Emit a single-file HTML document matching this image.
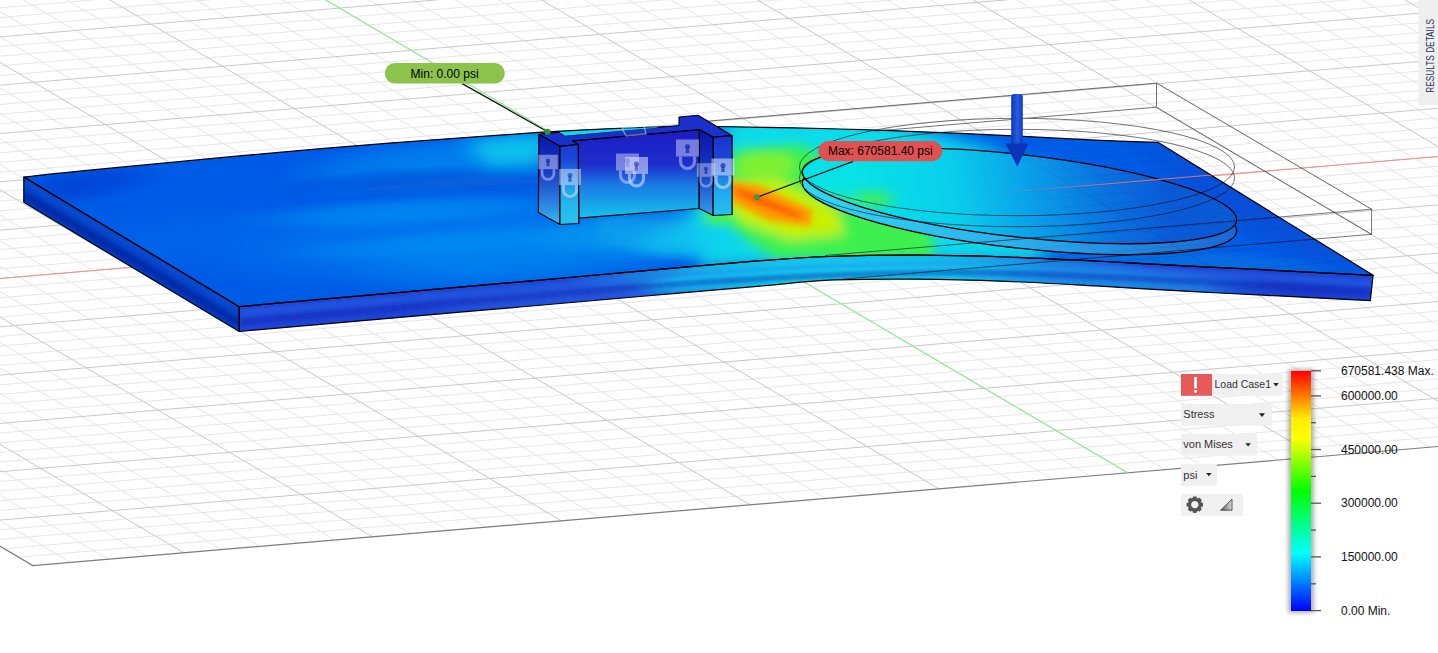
<!DOCTYPE html><html><head><meta charset="utf-8"><style>
html,body{margin:0;padding:0;background:#fff;overflow:hidden}
svg{position:absolute;left:0;top:0;display:block}
text{font-family:"Liberation Sans",sans-serif}
</style></head><body>
<svg width="1438" height="653" viewBox="0 0 1438 653">
<defs>
<filter id="blur10" x="-50%" y="-50%" width="200%" height="200%"><feGaussianBlur stdDeviation="10"/></filter>
<filter id="blur6" x="-50%" y="-50%" width="200%" height="200%"><feGaussianBlur stdDeviation="6"/></filter>
<filter id="blur14" x="-50%" y="-50%" width="200%" height="200%"><feGaussianBlur stdDeviation="14"/></filter>
<filter id="blur3" x="-50%" y="-50%" width="200%" height="200%"><feGaussianBlur stdDeviation="3"/></filter>
<filter id="blur2" x="-50%" y="-50%" width="200%" height="200%"><feGaussianBlur stdDeviation="2"/></filter>
<linearGradient id="bar" x1="0" y1="0" x2="0" y2="1">
<stop offset="0" stop-color="#ff0000"/><stop offset="0.2" stop-color="#ffee00"/><stop offset="0.28" stop-color="#ffff00"/><stop offset="0.5" stop-color="#00ff00"/><stop offset="0.76" stop-color="#00ffff"/><stop offset="1" stop-color="#0000ff"/>
</linearGradient>
</defs>
<rect width="1438" height="653" fill="#fff"/>

<g id="grid"><path d="M70.7 562.4L-1505.6 -367.1 M108.4 559.2L-1467.9 -370.3 M146.2 556.0L-1430.1 -373.5 M221.7 549.6L-1354.6 -379.9 M259.4 546.4L-1316.9 -383.1 M297.2 543.2L-1279.1 -386.3 M334.9 540.0L-1241.4 -389.5 M410.4 533.6L-1165.9 -395.9 M448.2 530.4L-1128.1 -399.1 M485.9 527.2L-1090.4 -402.3 M523.7 524.0L-1052.6 -405.5 M599.2 517.6L-977.1 -411.9 M636.9 514.4L-939.4 -415.1 M674.7 511.2L-901.6 -418.3 M712.4 508.0L-863.9 -421.5 M787.9 501.6L-788.4 -427.9 M825.7 498.4L-750.6 -431.1 M863.4 495.2L-712.9 -434.3 M901.2 492.0L-675.1 -437.5 M976.7 485.6L-599.6 -443.9 M1014.4 482.4L-561.9 -447.1 M1052.2 479.2L-524.1 -450.3 M1089.9 476.0L-486.4 -453.5 M1165.4 469.6L-410.9 -459.9 M1203.2 466.4L-373.1 -463.1 M1240.9 463.2L-335.4 -466.3 M1278.7 460.0L-297.6 -469.5 M1354.2 453.6L-222.1 -475.9 M1391.9 450.4L-184.4 -479.1 M1429.7 447.2L-146.6 -482.3 M1467.4 444.0L-108.9 -485.5 M1542.9 437.6L-33.4 -491.9 M1580.7 434.4L4.4 -495.1 M1618.4 431.2L42.1 -498.3 M1656.2 428.0L79.9 -501.5 M1731.7 421.6L155.4 -507.9 M1769.4 418.4L193.1 -511.1 M1807.2 415.2L230.9 -514.3 M1844.9 412.0L268.6 -517.5 M1920.4 405.6L344.1 -523.9 M1958.2 402.4L381.9 -527.1 M1995.9 399.2L419.6 -530.3 M2033.7 396.0L457.4 -533.5 M2109.2 389.6L532.9 -539.9 M2146.9 386.4L570.6 -543.1 M2184.7 383.2L608.4 -546.3 M2222.4 380.0L646.1 -549.5 M2297.9 373.6L721.6 -555.9 M2335.7 370.4L759.4 -559.1 M2373.4 367.2L797.1 -562.3 M2411.2 364.0L834.9 -565.5 M2486.7 357.6L910.4 -571.9 M2524.5 354.4L948.2 -575.1 M2562.2 351.2L985.9 -578.3 M2600.0 348.0L1023.7 -581.5 M2675.5 341.6L1099.2 -587.9 M2713.2 338.4L1136.9 -591.1 M2751.0 335.2L1174.7 -594.3 M2788.7 332.0L1212.4 -597.5 M2864.2 325.6L1287.9 -603.9 M2902.0 322.4L1325.7 -607.1 M2939.7 319.2L1363.4 -610.3 M2977.5 316.0L1401.2 -613.5 M3053.0 309.6L1476.7 -619.9 M3090.7 306.4L1514.4 -623.1 M3128.5 303.2L1552.2 -626.3 M3166.2 300.0L1589.9 -629.5 M3241.7 293.6L1665.4 -635.9 M3279.5 290.4L1703.2 -639.1 M3317.2 287.2L1740.9 -642.3 M3355.0 284.0L1778.7 -645.5 M3430.5 277.6L1854.2 -651.9 M3468.2 274.4L1891.9 -655.1 M3506.0 271.2L1929.7 -658.3 M3543.7 268.0L1967.4 -661.5 M3619.2 261.6L2042.9 -667.9 M3657.0 258.4L2080.7 -671.1 M3694.7 255.2L2118.4 -674.3 M3732.5 252.0L2156.2 -677.5 M3808.0 245.6L2231.7 -683.9 M3845.7 242.4L2269.4 -687.1 M3883.5 239.2L2307.2 -690.3 M3921.2 236.0L2344.9 -693.5 M3996.7 229.6L2420.4 -699.9 M4034.5 226.4L2458.2 -703.1 M4072.2 223.2L2495.9 -706.3 M4109.9 220.0L2533.7 -709.5 M18.6 557.1L4133.4 208.3 M4.3 548.7L4119.0 199.9 M-10.0 540.2L4104.7 191.4 M-24.4 531.8L4090.4 183.0 M-53.0 514.9L4061.7 166.1 M-67.4 506.5L4047.4 157.7 M-81.7 498.0L4033.1 149.2 M-96.0 489.6L4018.7 140.8 M-124.7 472.6L3990.1 123.8 M-139.0 464.2L3975.7 115.4 M-153.3 455.8L3961.4 106.9 M-167.7 447.3L3947.1 98.5 M-196.3 430.4L3918.4 81.6 M-210.7 422.0L3904.1 73.2 M-225.0 413.5L3889.8 64.7 M-239.3 405.1L3875.4 56.2 M-268.0 388.2L3846.8 39.4 M-282.3 379.7L3832.4 30.9 M-296.6 371.2L3818.1 22.5 M-311.0 362.8L3803.8 14.0 M-339.6 345.9L3775.1 -2.9 M-354.0 337.5L3760.8 -11.3 M-368.3 329.0L3746.5 -19.8 M-382.6 320.6L3732.1 -28.2 M-411.3 303.7L3703.5 -45.1 M-425.6 295.2L3689.1 -53.6 M-439.9 286.8L3674.8 -62.0 M-454.3 278.3L3660.5 -70.5 M-482.9 261.4L3631.8 -87.4 M-497.3 253.0L3617.5 -95.8 M-511.6 244.5L3603.2 -104.3 M-525.9 236.1L3588.8 -112.7 M-554.6 219.2L3560.2 -129.6 M-568.9 210.7L3545.8 -138.1 M-583.2 202.3L3531.5 -146.5 M-597.6 193.8L3517.2 -155.0 M-626.2 176.9L3488.5 -171.9 M-640.6 168.5L3474.2 -180.3 M-654.9 160.0L3459.9 -188.8 M-669.2 151.6L3445.5 -197.2 M-697.9 134.7L3416.9 -214.1 M-712.2 126.2L3402.5 -222.6 M-726.5 117.8L3388.2 -231.0 M-740.9 109.3L3373.9 -239.5 M-769.5 92.4L3345.2 -256.4 M-783.9 84.0L3330.9 -264.8 M-798.2 75.5L3316.6 -273.3 M-812.5 67.1L3302.2 -281.8 M-841.2 50.2L3273.6 -298.6 M-855.5 41.7L3259.2 -307.1 M-869.8 33.3L3244.9 -315.5 M-884.2 24.8L3230.6 -324.0 M-912.8 7.9L3201.9 -340.9 M-927.2 -0.5L3187.6 -349.3 M-941.5 -9.0L3173.3 -357.8 M-955.8 -17.4L3158.9 -366.2 M-984.5 -34.3L3130.3 -383.1 M-998.8 -42.8L3115.9 -391.6 M-1013.1 -51.2L3101.6 -400.0 M-1027.5 -59.7L3087.3 -408.5 M-1056.1 -76.6L3058.6 -425.4 M-1070.5 -85.0L3044.3 -433.8 M-1084.8 -93.5L3030.0 -442.3 M-1099.1 -101.9L3015.6 -450.7 M-1127.8 -118.8L2987.0 -467.6 M-1142.1 -127.3L2972.6 -476.1 M-1156.4 -135.7L2958.3 -484.5 M-1170.8 -144.2L2944.0 -493.0 M-1199.4 -161.1L2915.3 -509.9 M-1213.8 -169.5L2901.0 -518.3 M-1228.1 -178.0L2886.7 -526.8 M-1242.4 -186.4L2872.3 -535.2 M-1271.1 -203.3L2843.7 -552.1 M-1285.4 -211.8L2829.3 -560.6 M-1299.7 -220.2L2815.0 -569.0 M-1314.1 -228.7L2800.7 -577.5 M-1342.7 -245.6L2772.0 -594.4 M-1357.1 -254.0L2757.7 -602.8 M-1371.4 -262.5L2743.4 -611.3 M-1385.7 -270.9L2729.0 -619.8 M-1414.4 -287.8L2700.4 -636.6 M-1428.7 -296.3L2686.0 -645.1 M-1443.0 -304.7L2671.7 -653.5 M-1457.4 -313.2L2657.4 -662.0 M-1486.0 -330.1L2628.7 -678.9 M-1500.4 -338.5L2614.4 -687.3 M-1514.7 -347.0L2600.1 -695.8 M-1529.0 -355.4L2585.7 -704.2" stroke="#e6e6e6" stroke-width="1" fill="none"/><path d="M183.9 552.8L-1392.4 -376.7 M372.7 536.8L-1203.6 -392.7 M561.4 520.8L-1014.9 -408.7 M750.2 504.8L-826.1 -424.7 M938.9 488.8L-637.4 -440.7 M1127.7 472.8L-448.6 -456.7 M1316.4 456.8L-259.9 -472.7 M1505.2 440.8L-71.1 -488.7 M1693.9 424.8L117.6 -504.7 M1882.7 408.8L306.4 -520.7 M2071.4 392.8L495.1 -536.7 M2260.2 376.8L683.9 -552.7 M2448.9 360.8L872.6 -568.7 M2637.7 344.8L1061.4 -584.7 M2826.5 328.8L1250.2 -600.7 M3015.2 312.8L1438.9 -616.7 M3204.0 296.8L1627.7 -632.7 M3392.7 280.8L1816.4 -648.7 M3581.5 264.8L2005.2 -664.7 M3770.2 248.8L2193.9 -680.7 M3959.0 232.8L2382.7 -696.7 M4147.7 216.8L2571.4 -712.7 M-38.7 523.4L4076.1 174.5 M-110.4 481.1L4004.4 132.3 M-182.0 438.9L3932.8 90.0 M-253.7 396.6L3861.1 47.8 M-325.3 354.4L3789.5 5.6 M-397.0 312.1L3717.8 -36.7 M-468.6 269.9L3646.2 -78.9 M-540.2 227.6L3574.5 -121.2 M-611.9 185.4L3502.9 -163.4 M-683.6 143.1L3431.2 -205.7 M-755.2 100.9L3359.6 -247.9 M-826.9 58.6L3287.9 -290.2 M-898.5 16.4L3216.2 -332.4 M-970.2 -25.9L3144.6 -374.7 M-1041.8 -68.1L3073.0 -416.9 M-1113.5 -110.4L3001.3 -459.2 M-1185.1 -152.6L2929.7 -501.4 M-1256.8 -194.9L2858.0 -543.7 M-1328.4 -237.1L2786.4 -586.0 M-1400.1 -279.4L2714.7 -628.2 M-1471.7 -321.6L2643.1 -670.5 M-1543.4 -363.9L2571.4 -712.7" stroke="#c8c8c8" stroke-width="1" fill="none"/>
<path d="M-1543.4 -363.9L32.9 565.6L4147.7 216.8" stroke="#7c7c7c" stroke-width="1.2" fill="none"/>
<line x1="-397.0" y1="312.1" x2="3717.8" y2="-36.7" stroke="#f29090" stroke-width="1.1"/>
<line x1="1127.7" y1="472.8" x2="-448.6" y2="-456.7" stroke="#90ec90" stroke-width="1.1"/>
</g>
<clipPath id="cTop"><path d="M23.8 177.0C36.5 175.7 50.0 174.0 100.0 169.2C150.0 164.4 250.9 154.5 324.0 148.4C397.1 142.3 485.6 135.9 538.3 132.4C591.0 128.9 610.2 128.5 640.0 127.5C669.8 126.5 683.7 126.2 717.0 126.5C750.3 126.8 799.5 127.9 840.0 129.0C880.5 130.1 916.7 131.4 960.0 133.3C1003.3 135.2 1067.0 138.8 1100.0 140.3C1133.0 141.8 1148.2 142.0 1157.9 142.3L1373.1 275.3C1356.6 274.5 1305.3 271.9 1274.0 270.3C1242.7 268.7 1214.7 267.4 1185.0 265.9C1155.3 264.3 1125.7 262.5 1096.0 261.0C1066.3 259.5 1036.7 258.0 1007.0 257.0C977.3 256.0 947.7 255.3 918.0 255.2C888.3 255.1 855.3 255.6 829.0 256.5C802.7 257.4 791.5 258.2 760.0 260.7C728.5 263.1 680.0 267.7 640.0 271.2C600.0 274.7 560.0 278.3 520.0 281.8C480.0 285.3 440.0 288.8 400.0 292.3C360.0 295.8 306.8 300.4 280.0 302.8C253.2 305.2 246.0 306.1 239.2 306.7Z"/></clipPath>
<clipPath id="cFront"><path d="M239.2 306.7C246.0 306.1 253.2 305.2 280.0 302.8C306.8 300.4 360.0 295.8 400.0 292.3C440.0 288.8 480.0 285.3 520.0 281.8C560.0 278.3 600.0 274.7 640.0 271.2C680.0 267.7 728.5 263.1 760.0 260.7C791.5 258.2 802.7 257.4 829.0 256.5C855.3 255.6 888.3 255.1 918.0 255.2C947.7 255.3 977.3 256.0 1007.0 257.0C1036.7 258.0 1066.3 259.5 1096.0 261.0C1125.7 262.5 1155.3 264.3 1185.0 265.9C1214.7 267.4 1242.7 268.7 1274.0 270.3C1305.3 271.9 1356.6 274.5 1373.1 275.3L1370.3 300.6C1354.2 299.8 1304.9 297.3 1274.0 295.7C1243.1 294.1 1214.7 292.8 1185.0 291.2C1155.3 289.6 1125.7 287.5 1096.0 285.9C1066.3 284.3 1036.7 282.5 1007.0 281.4C977.3 280.3 947.7 279.4 918.0 279.2C888.3 279.0 855.3 279.0 829.0 280.1C802.7 281.2 791.5 283.4 760.0 286.1C728.5 288.8 680.0 293.0 640.0 296.5C600.0 300.0 560.0 303.5 520.0 307.0C480.0 310.5 440.0 313.9 400.0 317.4C360.0 320.9 306.8 325.4 280.0 327.8C253.2 330.2 246.0 330.9 239.2 331.5Z"/></clipPath>
<clipPath id="cLeft"><path d="M23.8 177L239.2 306.7L239.2 331.5L23.8 202.3Z"/></clipPath>
<g clip-path="url(#cLeft)"><rect x="0" y="150" width="260" height="200" fill="#0444c8"/><g filter="url(#blur3)"><path d="M23 194 L239 323" stroke="#001a98" stroke-width="6"/><path d="M23 181 L239 310" stroke="#1050d8" stroke-width="4"/></g></g>
<defs><radialGradient id="rg0"><stop offset="0" stop-color="#12d0ee" stop-opacity="1"/><stop offset="0.5" stop-color="#12d0ee" stop-opacity="0.75"/><stop offset="1" stop-color="#12d0ee" stop-opacity="0"/></radialGradient></defs>
<defs><radialGradient id="rg1"><stop offset="0" stop-color="#1a90e8" stop-opacity="1"/><stop offset="0.5" stop-color="#1a90e8" stop-opacity="0.75"/><stop offset="1" stop-color="#1a90e8" stop-opacity="0"/></radialGradient></defs>
<defs><radialGradient id="rg2"><stop offset="0" stop-color="#40e890" stop-opacity="1"/><stop offset="0.5" stop-color="#40e890" stop-opacity="0.75"/><stop offset="1" stop-color="#40e890" stop-opacity="0"/></radialGradient></defs>
<defs><radialGradient id="rg3"><stop offset="0" stop-color="#2a62e0" stop-opacity="1"/><stop offset="0.5" stop-color="#2a62e0" stop-opacity="0.75"/><stop offset="1" stop-color="#2a62e0" stop-opacity="0"/></radialGradient></defs>
<defs><radialGradient id="rg4"><stop offset="0" stop-color="#10c0f0" stop-opacity="1"/><stop offset="0.5" stop-color="#10c0f0" stop-opacity="0.75"/><stop offset="1" stop-color="#10c0f0" stop-opacity="0"/></radialGradient></defs>
<defs><radialGradient id="rg5"><stop offset="0" stop-color="#1a3ccc" stop-opacity="1"/><stop offset="0.5" stop-color="#1a3ccc" stop-opacity="0.75"/><stop offset="1" stop-color="#1a3ccc" stop-opacity="0"/></radialGradient></defs>
<g clip-path="url(#cFront)"><rect x="200" y="240" width="1200" height="100" fill="#1e44d6"/><ellipse cx="860" cy="275" rx="300" ry="40" transform="rotate(0 860 275)" fill="url(#rg0)" opacity="1.0"/><ellipse cx="860" cy="275" rx="200" ry="30" transform="rotate(0 860 275)" fill="url(#rg0)" opacity="0.8"/><ellipse cx="1120" cy="282" rx="170" ry="18" transform="rotate(3 1120 282)" fill="url(#rg1)" opacity="0.9"/><ellipse cx="860" cy="288" rx="110" ry="12" transform="rotate(0 860 288)" fill="url(#rg2)" opacity="0.9"/><ellipse cx="560" cy="297" rx="160" ry="12" transform="rotate(-5 560 297)" fill="url(#rg3)" opacity="0.6"/><ellipse cx="690" cy="283" rx="60" ry="10" transform="rotate(-5 690 283)" fill="url(#rg4)" opacity="0.9"/><ellipse cx="1300" cy="292" rx="100" ry="14" transform="rotate(3 1300 292)" fill="url(#rg5)" opacity="0.8"/><g filter="url(#blur2)"><path d="M240 313 L640 278 C760 268 900 262 1000 264 C1150 269 1250 276 1372 283" stroke="#2a78ec" stroke-width="3" fill="none" opacity="0.6"/><path d="M240 322 L640 287 C760 277 900 271 1000 273 C1150 278 1250 285 1372 292" stroke="#1420b0" stroke-width="3.5" fill="none" opacity="0.75"/></g></g>
<defs><radialGradient id="rg6"><stop offset="0" stop-color="#0078ee" stop-opacity="1"/><stop offset="0.5" stop-color="#0078ee" stop-opacity="0.75"/><stop offset="1" stop-color="#0078ee" stop-opacity="0"/></radialGradient></defs>
<defs><radialGradient id="rg7"><stop offset="0" stop-color="#0086f0" stop-opacity="1"/><stop offset="0.5" stop-color="#0086f0" stop-opacity="0.75"/><stop offset="1" stop-color="#0086f0" stop-opacity="0"/></radialGradient></defs>
<defs><radialGradient id="rg8"><stop offset="0" stop-color="#0088f0" stop-opacity="1"/><stop offset="0.5" stop-color="#0088f0" stop-opacity="0.75"/><stop offset="1" stop-color="#0088f0" stop-opacity="0"/></radialGradient></defs>
<defs><radialGradient id="rg9"><stop offset="0" stop-color="#0090f0" stop-opacity="1"/><stop offset="0.5" stop-color="#0090f0" stop-opacity="0.75"/><stop offset="1" stop-color="#0090f0" stop-opacity="0"/></radialGradient></defs>
<defs><radialGradient id="rg10"><stop offset="0" stop-color="#0094f4" stop-opacity="1"/><stop offset="0.5" stop-color="#0094f4" stop-opacity="0.75"/><stop offset="1" stop-color="#0094f4" stop-opacity="0"/></radialGradient></defs>
<defs><radialGradient id="rg11"><stop offset="0" stop-color="#0050da" stop-opacity="1"/><stop offset="0.5" stop-color="#0050da" stop-opacity="0.75"/><stop offset="1" stop-color="#0050da" stop-opacity="0"/></radialGradient></defs>
<defs><radialGradient id="rg12"><stop offset="0" stop-color="#0068ea" stop-opacity="1"/><stop offset="0.5" stop-color="#0068ea" stop-opacity="0.75"/><stop offset="1" stop-color="#0068ea" stop-opacity="0"/></radialGradient></defs>
<defs><radialGradient id="rg13"><stop offset="0" stop-color="#0040d4" stop-opacity="1"/><stop offset="0.5" stop-color="#0040d4" stop-opacity="0.75"/><stop offset="1" stop-color="#0040d4" stop-opacity="0"/></radialGradient></defs>
<defs><radialGradient id="rg14"><stop offset="0" stop-color="#10c8f0" stop-opacity="1"/><stop offset="0.5" stop-color="#10c8f0" stop-opacity="0.75"/><stop offset="1" stop-color="#10c8f0" stop-opacity="0"/></radialGradient></defs>
<defs><radialGradient id="rg15"><stop offset="0" stop-color="#0a9cf0" stop-opacity="1"/><stop offset="0.5" stop-color="#0a9cf0" stop-opacity="0.75"/><stop offset="1" stop-color="#0a9cf0" stop-opacity="0"/></radialGradient></defs>
<defs><radialGradient id="rg16"><stop offset="0" stop-color="#0a4cd6" stop-opacity="1"/><stop offset="0.5" stop-color="#0a4cd6" stop-opacity="0.75"/><stop offset="1" stop-color="#0a4cd6" stop-opacity="0"/></radialGradient></defs>
<defs><radialGradient id="rg17"><stop offset="0" stop-color="#0a72e2" stop-opacity="1"/><stop offset="0.5" stop-color="#0a72e2" stop-opacity="0.75"/><stop offset="1" stop-color="#0a72e2" stop-opacity="0"/></radialGradient></defs>
<g clip-path="url(#cTop)"><rect x="0" y="100" width="1400" height="220" fill="#005ce6"/><ellipse cx="420" cy="235" rx="230" ry="45" transform="rotate(-6 420 235)" fill="url(#rg6)" opacity="0.9"/><ellipse cx="540" cy="250" rx="220" ry="40" transform="rotate(-6 540 250)" fill="url(#rg7)" opacity="0.9"/><ellipse cx="430" cy="165" rx="150" ry="30" transform="rotate(-5 430 165)" fill="url(#rg8)" opacity="0.8"/><ellipse cx="1000" cy="200" rx="200" ry="60" transform="rotate(10 1000 200)" fill="url(#rg9)" opacity="0.8"/><ellipse cx="400" cy="212" rx="190" ry="16" transform="rotate(-3 400 212)" fill="url(#rg10)" opacity="0.6"/><ellipse cx="440" cy="244" rx="170" ry="14" transform="rotate(-4 440 244)" fill="url(#rg10)" opacity="0.5"/><ellipse cx="390" cy="180" rx="130" ry="12" transform="rotate(-4 390 180)" fill="url(#rg11)" opacity="0.6"/><ellipse cx="180" cy="240" rx="140" ry="30" transform="rotate(-8 180 240)" fill="url(#rg12)" opacity="0.6"/><ellipse cx="80" cy="185" rx="90" ry="20" transform="rotate(-8 80 185)" fill="url(#rg13)" opacity="0.8"/><g filter="url(#blur10)"><path d="M460 142 L538 133 L542 165 L490 165Z" fill="#08ccee"/><path d="M600 220 L700 212 L760 230 L700 250 L600 245Z" fill="#10a8ee"/><path d="M690 215 L730 110 L880 115 L990 150 L1060 210 L1040 262 L860 266 L700 268Z" fill="#08dcea"/><path d="M530 136 L620 131 L620 150 L550 158Z" fill="#10c8ec"/><ellipse cx="650" cy="232" rx="30" ry="5" fill="#0a64e0"/></g><g filter="url(#blur6)"><path d="M712 205 L736 150 L800 145 L870 178 L930 228 L935 258 L850 262 L775 258 L740 235Z" fill="#3cf050"/><ellipse cx="866" cy="195" rx="20" ry="7" fill="#60f040"/><ellipse cx="765" cy="165" rx="30" ry="14" fill="#80f030"/><ellipse cx="742" cy="208" rx="10" ry="6" fill="#e0f000"/><ellipse cx="718" cy="218" rx="16" ry="7" fill="#50f050"/><path d="M360 186 L470 176 L540 178 L540 186 L470 186 L360 194Z" fill="#0a5ad8"/><path d="M730 182 L780 180 L835 208 L845 234 L790 240 L742 222 L726 202Z" fill="#c8f000"/></g><g filter="url(#blur3)"><path d="M726 180 L760 186 L812 210 L810 226 L768 220 L732 202Z" fill="#ff9800"/><path d="M735 188 L757 196 L802 215 L799 218 L755 202 L735 192Z" fill="#ff3000"/></g><ellipse cx="680" cy="240" rx="70" ry="22" transform="rotate(0 680 240)" fill="url(#rg14)" opacity="0.8"/><ellipse cx="600" cy="235" rx="80" ry="20" transform="rotate(-5 600 235)" fill="url(#rg15)" opacity="0.6"/><ellipse cx="1250" cy="200" rx="160" ry="40" transform="rotate(30 1250 200)" fill="url(#rg16)" opacity="0.9"/><ellipse cx="1200" cy="262" rx="150" ry="14" transform="rotate(3 1200 262)" fill="url(#rg17)" opacity="0.8"/></g>
<path d="M23.8 177.0C36.5 175.7 50.0 174.0 100.0 169.2C150.0 164.4 250.9 154.5 324.0 148.4C397.1 142.3 485.6 135.9 538.3 132.4C591.0 128.9 610.2 128.5 640.0 127.5C669.8 126.5 683.7 126.2 717.0 126.5C750.3 126.8 799.5 127.9 840.0 129.0C880.5 130.1 916.7 131.4 960.0 133.3C1003.3 135.2 1067.0 138.8 1100.0 140.3C1133.0 141.8 1148.2 142.0 1157.9 142.3L1373.1 275.3C1356.6 274.5 1305.3 271.9 1274.0 270.3C1242.7 268.7 1214.7 267.4 1185.0 265.9C1155.3 264.3 1125.7 262.5 1096.0 261.0C1066.3 259.5 1036.7 258.0 1007.0 257.0C977.3 256.0 947.7 255.3 918.0 255.2C888.3 255.1 855.3 255.6 829.0 256.5C802.7 257.4 791.5 258.2 760.0 260.7C728.5 263.1 680.0 267.7 640.0 271.2C600.0 274.7 560.0 278.3 520.0 281.8C480.0 285.3 440.0 288.8 400.0 292.3C360.0 295.8 306.8 300.4 280.0 302.8C253.2 305.2 246.0 306.1 239.2 306.7Z" fill="none" stroke="#000" stroke-width="1.2" stroke-linejoin="round"/>
<path d="M239.2 306.7C246.0 306.1 253.2 305.2 280.0 302.8C306.8 300.4 360.0 295.8 400.0 292.3C440.0 288.8 480.0 285.3 520.0 281.8C560.0 278.3 600.0 274.7 640.0 271.2C680.0 267.7 728.5 263.1 760.0 260.7C791.5 258.2 802.7 257.4 829.0 256.5C855.3 255.6 888.3 255.1 918.0 255.2C947.7 255.3 977.3 256.0 1007.0 257.0C1036.7 258.0 1066.3 259.5 1096.0 261.0C1125.7 262.5 1155.3 264.3 1185.0 265.9C1214.7 267.4 1242.7 268.7 1274.0 270.3C1305.3 271.9 1356.6 274.5 1373.1 275.3L1370.3 300.6C1354.2 299.8 1304.9 297.3 1274.0 295.7C1243.1 294.1 1214.7 292.8 1185.0 291.2C1155.3 289.6 1125.7 287.5 1096.0 285.9C1066.3 284.3 1036.7 282.5 1007.0 281.4C977.3 280.3 947.7 279.4 918.0 279.2C888.3 279.0 855.3 279.0 829.0 280.1C802.7 281.2 791.5 283.4 760.0 286.1C728.5 288.8 680.0 293.0 640.0 296.5C600.0 300.0 560.0 303.5 520.0 307.0C480.0 310.5 440.0 313.9 400.0 317.4C360.0 320.9 306.8 325.4 280.0 327.8C253.2 330.2 246.0 330.9 239.2 331.5Z" fill="none" stroke="#000" stroke-width="1.2" stroke-linejoin="round"/>
<path d="M23.8 177L239.2 306.7L239.2 331.5L23.8 202.3Z" fill="none" stroke="#000" stroke-width="1.2" stroke-linejoin="round"/>
<defs><linearGradient id="discg" x1="860" y1="230" x2="1160" y2="150" gradientUnits="userSpaceOnUse"><stop offset="0" stop-color="#08e2e6"/><stop offset="0.3" stop-color="#0ad0ec"/><stop offset="0.55" stop-color="#0aa2ea"/><stop offset="0.8" stop-color="#0a72e0"/><stop offset="1" stop-color="#0a5ad8"/></linearGradient><linearGradient id="bandg" x1="800" y1="0" x2="1240" y2="0" gradientUnits="userSpaceOnUse"><stop offset="0" stop-color="#30d8f0"/><stop offset="0.5" stop-color="#2ab0ee"/><stop offset="1" stop-color="#1a66d6"/></linearGradient></defs>
<ellipse cx="1019.5" cy="206.8" rx="218.5" ry="41.2" transform="rotate(6.5 1019.5 206.8)" fill="url(#bandg)" stroke="#000" stroke-width="1.3"/>
<ellipse cx="1019.5" cy="195.8" rx="218.5" ry="41.2" transform="rotate(6.5 1019.5 195.8)" fill="url(#discg)" stroke="none"/>
<clipPath id="cDisc"><ellipse cx="1019.5" cy="195.8" rx="218.5" ry="41.2" transform="rotate(6.5 1019.5 195.8)"/></clipPath>
<g clip-path="url(#cDisc)"><g filter="url(#blur6)"><ellipse cx="872" cy="199" rx="22" ry="7" fill="#40f050"/><ellipse cx="830" cy="205" rx="30" ry="12" fill="#20e8b0"/></g></g>
<ellipse cx="1019.5" cy="195.8" rx="218.5" ry="41.2" transform="rotate(6.5 1019.5 195.8)" fill="none" stroke="#000" stroke-width="1.3"/>
<defs><linearGradient id="sagg" x1="980" y1="0" x2="1120" y2="0" gradientUnits="userSpaceOnUse"><stop offset="0" stop-color="#000"/><stop offset="1" stop-color="#fff"/></linearGradient><mask id="mSag" maskUnits="userSpaceOnUse" x="0" y="0" width="1438" height="653"><rect x="900" y="90" width="540" height="240" fill="url(#sagg)"/></mask></defs>
<g mask="url(#mSag)" opacity="0.22"><g clip-path="url(#cTop)"><path d="M70.7 562.4L-1505.6 -367.1 M108.4 559.2L-1467.9 -370.3 M146.2 556.0L-1430.1 -373.5 M221.7 549.6L-1354.6 -379.9 M259.4 546.4L-1316.9 -383.1 M297.2 543.2L-1279.1 -386.3 M334.9 540.0L-1241.4 -389.5 M410.4 533.6L-1165.9 -395.9 M448.2 530.4L-1128.1 -399.1 M485.9 527.2L-1090.4 -402.3 M523.7 524.0L-1052.6 -405.5 M599.2 517.6L-977.1 -411.9 M636.9 514.4L-939.4 -415.1 M674.7 511.2L-901.6 -418.3 M712.4 508.0L-863.9 -421.5 M787.9 501.6L-788.4 -427.9 M825.7 498.4L-750.6 -431.1 M863.4 495.2L-712.9 -434.3 M901.2 492.0L-675.1 -437.5 M976.7 485.6L-599.6 -443.9 M1014.4 482.4L-561.9 -447.1 M1052.2 479.2L-524.1 -450.3 M1089.9 476.0L-486.4 -453.5 M1165.4 469.6L-410.9 -459.9 M1203.2 466.4L-373.1 -463.1 M1240.9 463.2L-335.4 -466.3 M1278.7 460.0L-297.6 -469.5 M1354.2 453.6L-222.1 -475.9 M1391.9 450.4L-184.4 -479.1 M1429.7 447.2L-146.6 -482.3 M1467.4 444.0L-108.9 -485.5 M1542.9 437.6L-33.4 -491.9 M1580.7 434.4L4.4 -495.1 M1618.4 431.2L42.1 -498.3 M1656.2 428.0L79.9 -501.5 M1731.7 421.6L155.4 -507.9 M1769.4 418.4L193.1 -511.1 M1807.2 415.2L230.9 -514.3 M1844.9 412.0L268.6 -517.5 M1920.4 405.6L344.1 -523.9 M1958.2 402.4L381.9 -527.1 M1995.9 399.2L419.6 -530.3 M2033.7 396.0L457.4 -533.5 M2109.2 389.6L532.9 -539.9 M2146.9 386.4L570.6 -543.1 M2184.7 383.2L608.4 -546.3 M2222.4 380.0L646.1 -549.5 M2297.9 373.6L721.6 -555.9 M2335.7 370.4L759.4 -559.1 M2373.4 367.2L797.1 -562.3 M2411.2 364.0L834.9 -565.5 M2486.7 357.6L910.4 -571.9 M2524.5 354.4L948.2 -575.1 M2562.2 351.2L985.9 -578.3 M2600.0 348.0L1023.7 -581.5 M2675.5 341.6L1099.2 -587.9 M2713.2 338.4L1136.9 -591.1 M2751.0 335.2L1174.7 -594.3 M2788.7 332.0L1212.4 -597.5 M2864.2 325.6L1287.9 -603.9 M2902.0 322.4L1325.7 -607.1 M2939.7 319.2L1363.4 -610.3 M2977.5 316.0L1401.2 -613.5 M3053.0 309.6L1476.7 -619.9 M3090.7 306.4L1514.4 -623.1 M3128.5 303.2L1552.2 -626.3 M3166.2 300.0L1589.9 -629.5 M3241.7 293.6L1665.4 -635.9 M3279.5 290.4L1703.2 -639.1 M3317.2 287.2L1740.9 -642.3 M3355.0 284.0L1778.7 -645.5 M3430.5 277.6L1854.2 -651.9 M3468.2 274.4L1891.9 -655.1 M3506.0 271.2L1929.7 -658.3 M3543.7 268.0L1967.4 -661.5 M3619.2 261.6L2042.9 -667.9 M3657.0 258.4L2080.7 -671.1 M3694.7 255.2L2118.4 -674.3 M3732.5 252.0L2156.2 -677.5 M3808.0 245.6L2231.7 -683.9 M3845.7 242.4L2269.4 -687.1 M3883.5 239.2L2307.2 -690.3 M3921.2 236.0L2344.9 -693.5 M3996.7 229.6L2420.4 -699.9 M4034.5 226.4L2458.2 -703.1 M4072.2 223.2L2495.9 -706.3 M4109.9 220.0L2533.7 -709.5 M18.6 557.1L4133.4 208.3 M4.3 548.7L4119.0 199.9 M-10.0 540.2L4104.7 191.4 M-24.4 531.8L4090.4 183.0 M-53.0 514.9L4061.7 166.1 M-67.4 506.5L4047.4 157.7 M-81.7 498.0L4033.1 149.2 M-96.0 489.6L4018.7 140.8 M-124.7 472.6L3990.1 123.8 M-139.0 464.2L3975.7 115.4 M-153.3 455.8L3961.4 106.9 M-167.7 447.3L3947.1 98.5 M-196.3 430.4L3918.4 81.6 M-210.7 422.0L3904.1 73.2 M-225.0 413.5L3889.8 64.7 M-239.3 405.1L3875.4 56.2 M-268.0 388.2L3846.8 39.4 M-282.3 379.7L3832.4 30.9 M-296.6 371.2L3818.1 22.5 M-311.0 362.8L3803.8 14.0 M-339.6 345.9L3775.1 -2.9 M-354.0 337.5L3760.8 -11.3 M-368.3 329.0L3746.5 -19.8 M-382.6 320.6L3732.1 -28.2 M-411.3 303.7L3703.5 -45.1 M-425.6 295.2L3689.1 -53.6 M-439.9 286.8L3674.8 -62.0 M-454.3 278.3L3660.5 -70.5 M-482.9 261.4L3631.8 -87.4 M-497.3 253.0L3617.5 -95.8 M-511.6 244.5L3603.2 -104.3 M-525.9 236.1L3588.8 -112.7 M-554.6 219.2L3560.2 -129.6 M-568.9 210.7L3545.8 -138.1 M-583.2 202.3L3531.5 -146.5 M-597.6 193.8L3517.2 -155.0 M-626.2 176.9L3488.5 -171.9 M-640.6 168.5L3474.2 -180.3 M-654.9 160.0L3459.9 -188.8 M-669.2 151.6L3445.5 -197.2 M-697.9 134.7L3416.9 -214.1 M-712.2 126.2L3402.5 -222.6 M-726.5 117.8L3388.2 -231.0 M-740.9 109.3L3373.9 -239.5 M-769.5 92.4L3345.2 -256.4 M-783.9 84.0L3330.9 -264.8 M-798.2 75.5L3316.6 -273.3 M-812.5 67.1L3302.2 -281.8 M-841.2 50.2L3273.6 -298.6 M-855.5 41.7L3259.2 -307.1 M-869.8 33.3L3244.9 -315.5 M-884.2 24.8L3230.6 -324.0 M-912.8 7.9L3201.9 -340.9 M-927.2 -0.5L3187.6 -349.3 M-941.5 -9.0L3173.3 -357.8 M-955.8 -17.4L3158.9 -366.2 M-984.5 -34.3L3130.3 -383.1 M-998.8 -42.8L3115.9 -391.6 M-1013.1 -51.2L3101.6 -400.0 M-1027.5 -59.7L3087.3 -408.5 M-1056.1 -76.6L3058.6 -425.4 M-1070.5 -85.0L3044.3 -433.8 M-1084.8 -93.5L3030.0 -442.3 M-1099.1 -101.9L3015.6 -450.7 M-1127.8 -118.8L2987.0 -467.6 M-1142.1 -127.3L2972.6 -476.1 M-1156.4 -135.7L2958.3 -484.5 M-1170.8 -144.2L2944.0 -493.0 M-1199.4 -161.1L2915.3 -509.9 M-1213.8 -169.5L2901.0 -518.3 M-1228.1 -178.0L2886.7 -526.8 M-1242.4 -186.4L2872.3 -535.2 M-1271.1 -203.3L2843.7 -552.1 M-1285.4 -211.8L2829.3 -560.6 M-1299.7 -220.2L2815.0 -569.0 M-1314.1 -228.7L2800.7 -577.5 M-1342.7 -245.6L2772.0 -594.4 M-1357.1 -254.0L2757.7 -602.8 M-1371.4 -262.5L2743.4 -611.3 M-1385.7 -270.9L2729.0 -619.8 M-1414.4 -287.8L2700.4 -636.6 M-1428.7 -296.3L2686.0 -645.1 M-1443.0 -304.7L2671.7 -653.5 M-1457.4 -313.2L2657.4 -662.0 M-1486.0 -330.1L2628.7 -678.9 M-1500.4 -338.5L2614.4 -687.3 M-1514.7 -347.0L2600.1 -695.8 M-1529.0 -355.4L2585.7 -704.2" stroke="#103080" stroke-width="1" fill="none" opacity="0.5"/><path d="M183.9 552.8L-1392.4 -376.7 M372.7 536.8L-1203.6 -392.7 M561.4 520.8L-1014.9 -408.7 M750.2 504.8L-826.1 -424.7 M938.9 488.8L-637.4 -440.7 M1127.7 472.8L-448.6 -456.7 M1316.4 456.8L-259.9 -472.7 M1505.2 440.8L-71.1 -488.7 M1693.9 424.8L117.6 -504.7 M1882.7 408.8L306.4 -520.7 M2071.4 392.8L495.1 -536.7 M2260.2 376.8L683.9 -552.7 M2448.9 360.8L872.6 -568.7 M2637.7 344.8L1061.4 -584.7 M2826.5 328.8L1250.2 -600.7 M3015.2 312.8L1438.9 -616.7 M3204.0 296.8L1627.7 -632.7 M3392.7 280.8L1816.4 -648.7 M3581.5 264.8L2005.2 -664.7 M3770.2 248.8L2193.9 -680.7 M3959.0 232.8L2382.7 -696.7 M4147.7 216.8L2571.4 -712.7 M-38.7 523.4L4076.1 174.5 M-110.4 481.1L4004.4 132.3 M-182.0 438.9L3932.8 90.0 M-253.7 396.6L3861.1 47.8 M-325.3 354.4L3789.5 5.6 M-397.0 312.1L3717.8 -36.7 M-468.6 269.9L3646.2 -78.9 M-540.2 227.6L3574.5 -121.2 M-611.9 185.4L3502.9 -163.4 M-683.6 143.1L3431.2 -205.7 M-755.2 100.9L3359.6 -247.9 M-826.9 58.6L3287.9 -290.2 M-898.5 16.4L3216.2 -332.4 M-970.2 -25.9L3144.6 -374.7 M-1041.8 -68.1L3073.0 -416.9 M-1113.5 -110.4L3001.3 -459.2 M-1185.1 -152.6L2929.7 -501.4 M-1256.8 -194.9L2858.0 -543.7 M-1328.4 -237.1L2786.4 -586.0 M-1400.1 -279.4L2714.7 -628.2 M-1471.7 -321.6L2643.1 -670.5 M-1543.4 -363.9L2571.4 -712.7" stroke="#103080" stroke-width="1" fill="none"/></g></g>
<g clip-path="url(#cTop)" mask="url(#mSag)"><line x1="1000" y1="193" x2="1440" y2="155.6" stroke="#f07878" stroke-width="1" opacity="0.9"/></g>
<g opacity="0.55"><ellipse cx="1017" cy="167" rx="217.6" ry="48.7" fill="none" stroke="#000" stroke-width="1"/>
<ellipse cx="1017" cy="178" rx="217.6" ry="48.7" fill="none" stroke="#000" stroke-width="1"/>
<path d="M1156.5 83.1L703.0 121.5 M1156.5 107.2L875.0 131.1 M1156.5 83.1L1156.5 107.2 M1156.5 83.1L1371.6 209.2 M1156.5 107.2L1371.6 234.3 M1371.6 209.2L1371.6 234.3 M1371.6 209.2L825.0 255.5 M1371.6 234.3L842.0 279.2" stroke="#000" stroke-width="1" fill="none"/></g>
<defs><linearGradient id="bw" x1="0" y1="130" x2="0" y2="220" gradientUnits="userSpaceOnUse"><stop offset="0" stop-color="#1c1cc4"/><stop offset="0.38" stop-color="#1e2ecc"/><stop offset="0.62" stop-color="#1a7ce4"/><stop offset="1" stop-color="#14c8ee"/></linearGradient><linearGradient id="bp" x1="0" y1="130" x2="0" y2="216" gradientUnits="userSpaceOnUse"><stop offset="0" stop-color="#1a2ccc"/><stop offset="0.35" stop-color="#1a48d8"/><stop offset="0.7" stop-color="#20a8ee"/><stop offset="1" stop-color="#28c0ee"/></linearGradient><linearGradient id="bl" x1="0" y1="130" x2="0" y2="220" gradientUnits="userSpaceOnUse"><stop offset="0" stop-color="#0614a8"/><stop offset="0.45" stop-color="#1838c4"/><stop offset="0.8" stop-color="#2a80e0"/><stop offset="1" stop-color="#30b0ea"/></linearGradient></defs>
<polygon points="572.3,140.9 699.4,129.6 699.2,208.5 578.8,218.1 578.2,144.5" fill="url(#bw)" stroke="#000" stroke-width="1.2" stroke-linejoin="round" />
<polygon points="538.8,134.3 559.2,132.1 565.0,135.7 679.0,125.5 679.0,117.0 698.0,115.3 732.2,135.7 713.3,137.2 699.4,129.6 572.3,140.9 578.2,144.5 559.9,146.3" fill="#1a30cc" stroke="#000" stroke-width="1.1" stroke-linejoin="round" />
<polygon points="559.2,132.1 655.0,127.2 660.0,127.5 565.0,135.7" fill="#10d8e8" stroke="none" stroke-width="0" stroke-linejoin="round" />
<polygon points="538.8,134.3 559.9,146.3 559.9,224.5 538.4,212.5" fill="url(#bl)" stroke="#000" stroke-width="1.2" stroke-linejoin="round" />
<polygon points="559.9,146.3 578.2,144.5 578.8,223.5 559.9,224.5" fill="url(#bp)" stroke="#000" stroke-width="1.2" stroke-linejoin="round" />
<polygon points="699.4,129.6 713.3,137.2 713.2,215.5 699.2,208.5" fill="url(#bl)" stroke="#000" stroke-width="1.2" stroke-linejoin="round" />
<polygon points="713.3,137.2 732.2,135.7 732.1,214.5 713.2,215.5" fill="url(#bp)" stroke="#000" stroke-width="1.2" stroke-linejoin="round" />
<g transform="translate(548 162) scale(0.85)" opacity="0.45"><path d="M-11.5 -8.5 h23 v17 h-23z" fill="#e4e8ff"/><path d="M-7 8.5 v5 a7 7 0 0 0 14 0 v-5" fill="none" stroke="#e4e8ff" stroke-width="3.2"/><circle cx="0" cy="-1.5" r="2.6" fill="#1a2a98" opacity="0.75"/><path d="M-1.3 -1 L1.3 -1 L2 5 L-2 5Z" fill="#1a2a98" opacity="0.75"/></g>
<g transform="translate(570 177) scale(0.95)" opacity="0.5"><path d="M-11.5 -8.5 h23 v17 h-23z" fill="#e4e8ff"/><path d="M-7 8.5 v5 a7 7 0 0 0 14 0 v-5" fill="none" stroke="#e4e8ff" stroke-width="3.2"/><circle cx="0" cy="-1.5" r="2.6" fill="#1a2a98" opacity="0.75"/><path d="M-1.3 -1 L1.3 -1 L2 5 L-2 5Z" fill="#1a2a98" opacity="0.75"/></g>
<g transform="translate(627.5 162) scale(1.0)" opacity="0.45"><path d="M-11.5 -8.5 h23 v17 h-23z" fill="#e4e8ff"/><path d="M-7 8.5 v5 a7 7 0 0 0 14 0 v-5" fill="none" stroke="#e4e8ff" stroke-width="3.2"/><circle cx="0" cy="-1.5" r="2.6" fill="#1a2a98" opacity="0.75"/><path d="M-1.3 -1 L1.3 -1 L2 5 L-2 5Z" fill="#1a2a98" opacity="0.75"/></g>
<g transform="translate(636.5 165.5) scale(1.0)" opacity="0.55"><path d="M-11.5 -8.5 h23 v17 h-23z" fill="#e4e8ff"/><path d="M-7 8.5 v5 a7 7 0 0 0 14 0 v-5" fill="none" stroke="#e4e8ff" stroke-width="3.2"/><circle cx="0" cy="-1.5" r="2.6" fill="#1a2a98" opacity="0.75"/><path d="M-1.3 -1 L1.3 -1 L2 5 L-2 5Z" fill="#1a2a98" opacity="0.75"/></g>
<g transform="translate(687.5 148) scale(1.0)" opacity="0.45"><path d="M-11.5 -8.5 h23 v17 h-23z" fill="#e4e8ff"/><path d="M-7 8.5 v5 a7 7 0 0 0 14 0 v-5" fill="none" stroke="#e4e8ff" stroke-width="3.2"/><circle cx="0" cy="-1.5" r="2.6" fill="#1a2a98" opacity="0.75"/><path d="M-1.3 -1 L1.3 -1 L2 5 L-2 5Z" fill="#1a2a98" opacity="0.75"/></g>
<g transform="translate(723 167) scale(1.0)" opacity="0.55"><path d="M-11.5 -8.5 h23 v17 h-23z" fill="#e4e8ff"/><path d="M-7 8.5 v5 a7 7 0 0 0 14 0 v-5" fill="none" stroke="#e4e8ff" stroke-width="3.2"/><circle cx="0" cy="-1.5" r="2.6" fill="#1a2a98" opacity="0.75"/><path d="M-1.3 -1 L1.3 -1 L2 5 L-2 5Z" fill="#1a2a98" opacity="0.75"/></g>
<g transform="translate(706 170) scale(0.8)" opacity="0.4"><path d="M-11.5 -8.5 h23 v17 h-23z" fill="#e4e8ff"/><path d="M-7 8.5 v5 a7 7 0 0 0 14 0 v-5" fill="none" stroke="#e4e8ff" stroke-width="3.2"/><circle cx="0" cy="-1.5" r="2.6" fill="#1a2a98" opacity="0.75"/><path d="M-1.3 -1 L1.3 -1 L2 5 L-2 5Z" fill="#1a2a98" opacity="0.75"/></g>
<g opacity="0.45"><path d="M622 128 L644 126 L646 134 L626 136Z" fill="none" stroke="#eef0ff" stroke-width="1.5"/></g>
<defs><linearGradient id="arr" x1="1011" y1="0" x2="1023" y2="0" gradientUnits="userSpaceOnUse"><stop offset="0" stop-color="#0a36bc"/><stop offset="0.55" stop-color="#2a5ce2"/><stop offset="1" stop-color="#0a3abf"/></linearGradient></defs>
<rect x="1011.2" y="94" width="11.6" height="52" rx="3" fill="url(#arr)"/>
<polygon points="1005.4,143.6 1028.6,143.6 1017.3,166.4" fill="#0a34b8"/>
<line x1="462.2" y1="83.6" x2="547.5" y2="131.8" stroke="#111" stroke-width="1.3"/>
<circle cx="547.5" cy="131.8" r="3" fill="#2a9a30"/>
<rect x="384.8" y="63.1" width="120" height="20.5" rx="10.2" fill="#8cc34b"/>
<text x="444.6" y="77.6" font-size="12" text-anchor="middle" fill="#000">Min: 0.00 psi</text>
<line x1="853.2" y1="161.4" x2="756.8" y2="197.3" stroke="#111" stroke-width="1.3"/>
<circle cx="756.8" cy="197.3" r="3" fill="#3a9a40"/>
<rect x="818.3" y="141" width="124" height="20.2" rx="10" fill="#e05252"/>
<text x="880.3" y="155.3" font-size="12" text-anchor="middle" fill="#000">Max: 670581.40 psi</text>
<rect x="1181" y="374" width="31" height="21.8" fill="#e85a5a"/>
<rect x="1194.2" y="377" width="2.8" height="11.5" fill="#fff"/><rect x="1194.2" y="390" width="2.8" height="2.8" fill="#fff"/>
<rect x="1212" y="374" width="71" height="21.8" fill="#f0f0f0"/>
<text x="1214.5" y="388.3" font-size="11" fill="#333" textLength="56.5" lengthAdjust="spacingAndGlyphs">Load Case1</text>
<polygon points="1273.3,382.9 1278.8,382.9 1276,386.6" fill="#222"/>
<rect x="1181" y="404" width="91" height="21.7" fill="#f0f0f0"/>
<text x="1183.3" y="418.3" font-size="11" fill="#333">Stress</text>
<polygon points="1259,413.2 1265,413.2 1262,416.9" fill="#222"/>
<rect x="1181" y="434" width="76" height="21.5" fill="#f0f0f0"/>
<text x="1183.3" y="448.3" font-size="11" fill="#333">von Mises</text>
<polygon points="1245.4,443.2 1250.9,443.2 1248.1,446.5" fill="#222"/>
<rect x="1181" y="464.3" width="36" height="21.5" fill="#f0f0f0"/>
<text x="1183.3" y="478.5" font-size="11" fill="#333">psi</text>
<polygon points="1206.2,473 1211.7,473 1208.9,476.3" fill="#222"/>
<rect x="1181" y="494" width="62" height="21.7" fill="#f0f0f0"/>
<g transform="translate(1194.8 504.7)"><circle r="5.4" fill="none" stroke="#555" stroke-width="3.4"/><rect x="-1.9" y="-8.2" width="3.8" height="4" transform="rotate(0)" fill="#555"/><rect x="-1.9" y="-8.2" width="3.8" height="4" transform="rotate(45)" fill="#555"/><rect x="-1.9" y="-8.2" width="3.8" height="4" transform="rotate(90)" fill="#555"/><rect x="-1.9" y="-8.2" width="3.8" height="4" transform="rotate(135)" fill="#555"/><rect x="-1.9" y="-8.2" width="3.8" height="4" transform="rotate(180)" fill="#555"/><rect x="-1.9" y="-8.2" width="3.8" height="4" transform="rotate(225)" fill="#555"/><rect x="-1.9" y="-8.2" width="3.8" height="4" transform="rotate(270)" fill="#555"/><rect x="-1.9" y="-8.2" width="3.8" height="4" transform="rotate(315)" fill="#555"/></g>
<defs><linearGradient id="tri" x1="0" y1="0" x2="1" y2="0"><stop offset="0" stop-color="#555"/><stop offset="1" stop-color="#ddd"/></linearGradient></defs>
<polygon points="1220.6,510.2 1232,499.2 1232,510.2" fill="url(#tri)" stroke="#333" stroke-width="0.8"/>
<g filter="url(#blur2)"><rect x="1288" y="369" width="26" height="244" fill="#000" opacity="0.3"/></g>
<rect x="1291" y="371" width="20" height="240" fill="url(#bar)"/>
<line x1="1311" y1="370.8" x2="1321" y2="370.8" stroke="#555" stroke-width="1.3"/>
<line x1="1311" y1="610.6" x2="1321" y2="610.6" stroke="#555" stroke-width="1.3"/>
<line x1="1311" y1="583.8" x2="1316" y2="583.8" stroke="#555" stroke-width="1.3"/>
<line x1="1311" y1="556.9" x2="1321" y2="556.9" stroke="#555" stroke-width="1.3"/>
<line x1="1311" y1="530.1" x2="1316" y2="530.1" stroke="#555" stroke-width="1.3"/>
<line x1="1311" y1="503.2" x2="1321" y2="503.2" stroke="#555" stroke-width="1.3"/>
<line x1="1311" y1="476.4" x2="1316" y2="476.4" stroke="#555" stroke-width="1.3"/>
<line x1="1311" y1="449.5" x2="1321" y2="449.5" stroke="#555" stroke-width="1.3"/>
<line x1="1311" y1="422.7" x2="1316" y2="422.7" stroke="#555" stroke-width="1.3"/>
<line x1="1311" y1="395.9" x2="1321" y2="395.9" stroke="#555" stroke-width="1.3"/>
<text x="1341" y="375.0" font-size="12" fill="#111">670581.438 Max.</text>
<text x="1341" y="400.1" font-size="12" fill="#111">600000.00</text>
<text x="1341" y="453.7" font-size="12" fill="#111">450000.00</text>
<text x="1341" y="507.4" font-size="12" fill="#111">300000.00</text>
<text x="1341" y="561.1" font-size="12" fill="#111">150000.00</text>
<text x="1341" y="614.8" font-size="12" fill="#111">0.00 Min.</text>
<rect x="1418.3" y="0" width="20" height="105" fill="#efefef"/>
<text transform="translate(1433.5 92.7) rotate(-90)" font-size="10.4" fill="#2a3550" textLength="73.7" lengthAdjust="spacingAndGlyphs">RESULTS DETAILS</text>
</svg></body></html>
